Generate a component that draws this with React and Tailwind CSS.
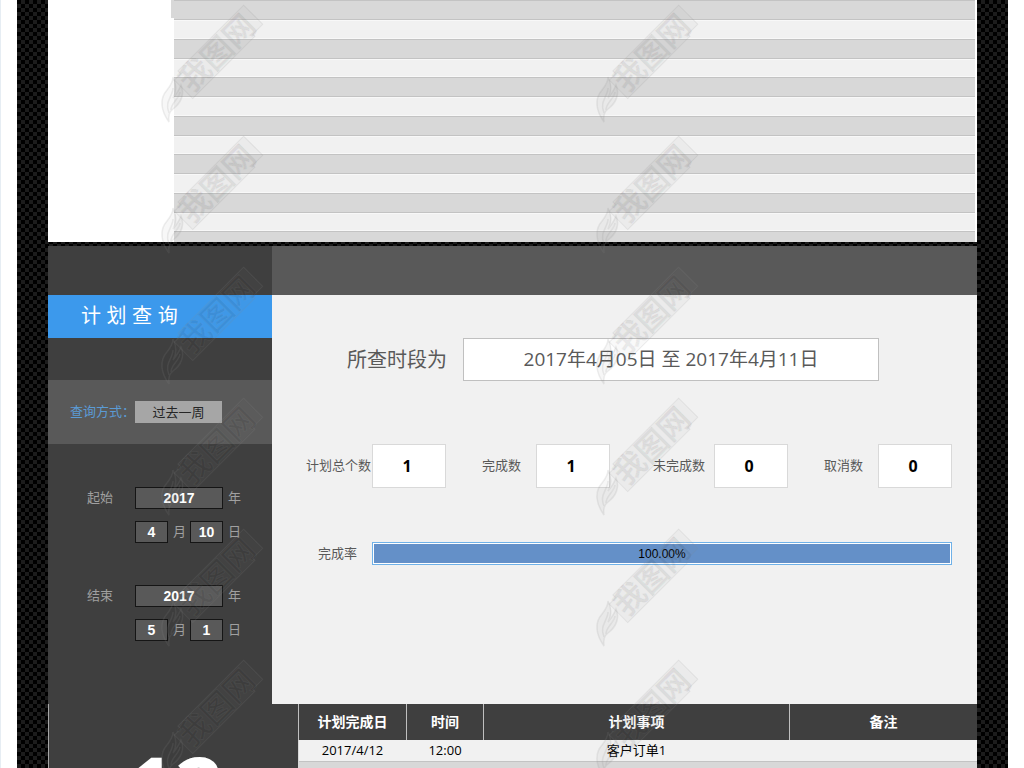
import React from 'react';

const stripes = Array.from({ length: 6 });

const stats = [
  { label: '计划总个数', value: 1, width: 'w-[140px]' },
  { label: '完成数', value: 1, width: 'w-[128px]' },
  { label: '未完成数', value: 0, width: 'w-[135px]' },
  { label: '取消数', value: 0, width: 'w-[128px]' },
];

const Watermark = () => (
  <svg width="110" height="116" viewBox="0 0 110 116" className="shrink-0 overflow-visible" aria-hidden="true">
    {/* Feather */}
    <path
      d="M9 114 C1 103 -1 91 7 82 C11 77 13 74 13 69 C17 77 17 83 13 90 C17 85 20 80 21 77 C25 86 21 95 13 101 C9 104 8 108 9 114 Z M9 105 C4 94 13 88 13 80 M11 102 C11 95 19 91 20 84"
      className="fill-black/3 stroke-[#8c8c8c]/15"
      strokeWidth="1.5"
    />
    <g transform="translate(32 70) rotate(-45)">
      <path
        d="M-14 -11 H-5 V-15 H88 V12 H74 V15 H-14 Z"
        className="fill-[#8c8c8c]/5 stroke-[#8c8c8c]/15"
      />
      <text
        x="-11"
        y="11"
        fontSize="31"
        className="fill-black/6 stroke-[#8c8c8c]/10 font-['Noto_Sans_CJK_SC',sans-serif] font-medium"
        strokeWidth="1"
      >
        我图网
      </text>
    </g>
  </svg>
);

const WatermarkColumn = () => (
  <div className="flex flex-col gap-[15px]">
    {Array.from({ length: 6 }).map((_, i) => (
      <Watermark key={i} />
    ))}
  </div>
);

const StripedSheet = () => (
  <section className="flex h-[242px] bg-white pr-0.5">
    <div className="flex w-[126px] shrink-0 justify-end">
      <div className="h-[18px] w-[3px] bg-[#d8d8d8]"></div>
    </div>
    <div className="flex-1 overflow-hidden">
      <div className="flex h-[231px] flex-col">
        {stripes.map((_, i) => (
          <React.Fragment key={i}>
            <div className="flex-[20] border-y border-[#c3c3c3] bg-[#d8d8d8]"></div>
            <div className="flex-[18] border-y border-[#f8f8f8] bg-[#f1f1f1]"></div>
          </React.Fragment>
        ))}
      </div>
      <div className="h-5 border-t border-[#c3c3c3] bg-[#d8d8d8]"></div>
    </div>
  </section>
);

const fieldClass =
  "h-[22px] border border-[#151515] bg-[#595959] text-center text-sm font-bold text-white font-['Liberation_Sans',sans-serif]";

const DateFields = ({ label, name, month, day }) => (
  <fieldset aria-label={label} className="flex pl-[39px] text-[13px] leading-5 text-[#a0a0a0]">
    <span className="w-12">{label}</span>
    <div className="flex flex-col gap-3">
      <div className="flex gap-[5px]">
        <input id={`${name}-year`} className={`${fieldClass} w-[88px]`} defaultValue="2017" />
        <label htmlFor={`${name}-year`}>年</label>
      </div>
      <div className="flex gap-[5px]">
        <input id={`${name}-month`} className={`${fieldClass} w-[33px]`} defaultValue={month} />
        <label htmlFor={`${name}-month`} className="w-3">月</label>
        <input id={`${name}-day`} className={`${fieldClass} w-[33px]`} defaultValue={day} />
        <label htmlFor={`${name}-day`}>日</label>
      </div>
    </div>
  </fieldset>
);

const Sidebar = () => (
  <aside className="w-56 shrink-0 bg-[#3f3f3f] pb-[63px]">
    <h1 className="h-[43px] bg-[#3c99ec] pl-[33px] text-xl leading-[42px] text-white font-['Liberation_Sans','Noto_Sans_CJK_SC',sans-serif]">
      计 划 查 询
    </h1>
    <div className="mt-[42px] flex h-16 items-center bg-[#595959] pl-[22px]">
      <label htmlFor="mode" className="w-[65px] text-[13px] whitespace-nowrap text-[#5b9bd5]">
        查询方式：
      </label>
      <select
        id="mode"
        className="h-[22px] w-[87px] appearance-none bg-[#a6a6a6] text-center text-[13px] leading-5 text-[#262626] [text-align-last:center]"
      >
        <option>过去一周</option>
      </select>
    </div>
    <div className="mt-[43px] flex flex-col gap-[42px]">
      <DateFields label="起始" name="start" month="4" day="10" />
      <DateFields label="结束" name="end" month="5" day="1" />
    </div>
  </aside>
);

const Summary = () => (
  <main className="flex-1 bg-[#f1f1f1] pt-[43px] pr-[25px] pl-[34px]">
    <div className="flex items-center gap-4 pr-[73px] pl-[41px] text-[#595959]">
      <span className="text-xl whitespace-nowrap">所查时段为</span>
      <div className="flex h-[43px] flex-1 items-center justify-center border border-[#c0c0c0] bg-white text-[19px] whitespace-nowrap">
        2017年4月05日 至 2017年4月11日
      </div>
    </div>

    <dl className="mt-[63px] grid grid-cols-[176fr_171fr_171fr_128fr]">
      {stats.map((stat) => (
        <div key={stat.label} className={`flex items-center justify-between ${stat.width}`}>
          <dt className="text-[13px] whitespace-nowrap text-[#595959]">{stat.label}</dt>
          <dd className="flex h-11 w-[74px] shrink-0 items-center justify-center border border-[#d9d9d9] bg-white pr-1 text-base font-bold text-black">
            {stat.value}
          </dd>
        </div>
      ))}
    </dl>

    <div className="mt-[54px] flex items-center pl-3 text-[13px] text-[#595959]">
      <span className="w-[54px]">完成率</span>
      <div className="h-[23px] flex-1 border border-[#6fb1e8] bg-white p-px">
        <div className="h-full bg-[#6490c8] text-center text-xs leading-5 text-black font-['Liberation_Sans',sans-serif]">
          100.00%
        </div>
      </div>
    </div>
  </main>
);

const PlanTable = () => (
  <section className="flex">
    <div className="w-[250px] shrink-0 border-l border-[#a6a6a6] bg-[#3f3f3f] pt-8 pl-[78px] text-[84px] leading-[100px] font-bold text-white">
      12
    </div>
    <div className="flex-1 bg-[#d8d8d8]">
      <table className="w-full table-fixed border-collapse text-center">
        <thead className="bg-[#3f3f3f] text-sm text-white">
          <tr className="h-9">
            <th className="w-[108px] border-l border-[#bfbfbf]">计划完成日</th>
            <th className="w-[77px] border-l border-[#bfbfbf]">时间</th>
            <th className="w-[306px] border-l border-[#bfbfbf]">计划事项</th>
            <th className="border-l border-[#bfbfbf]">备注</th>
          </tr>
        </thead>
        <tbody className="bg-[#f1f1f1] text-[13px] leading-[21px] text-black">
          <tr className="border-b border-[#c3c3c3]">
            <td>2017/4/12</td>
            <td>12:00</td>
            <td>客户订单1</td>
            <td></td>
          </tr>
        </tbody>
      </table>
    </div>
  </section>
);

const App = () => {
  return (
    <div className="relative h-screen overflow-hidden border-l border-[#e6edf3] bg-white pr-4 pl-4 font-['Open_Sans','Noto_Sans_CJK_SC',sans-serif]">
      <div className="flex flex-col gap-1 bg-[#000] bg-[repeating-conic-gradient(#1c1c1c_0%_25%,#000000_0%_50%)] bg-[length:8px_8px] px-[31px]">
        <StripedSheet />
        <div>
          <div className="flex h-[49px]">
            <div className="w-56 bg-[#3f3f3f]"></div>
            <div className="flex-1 bg-[#595959]"></div>
          </div>
          <div className="flex">
            <Sidebar />
            <Summary />
          </div>
          <PlanTable />
        </div>
      </div>

      {/* Watermark overlay */}
      <div className="pointer-events-none absolute inset-0 flex gap-[325px] overflow-hidden pt-2 pl-[159px]">
        <WatermarkColumn />
        <WatermarkColumn />
      </div>
    </div>
  );
};

export default App;
